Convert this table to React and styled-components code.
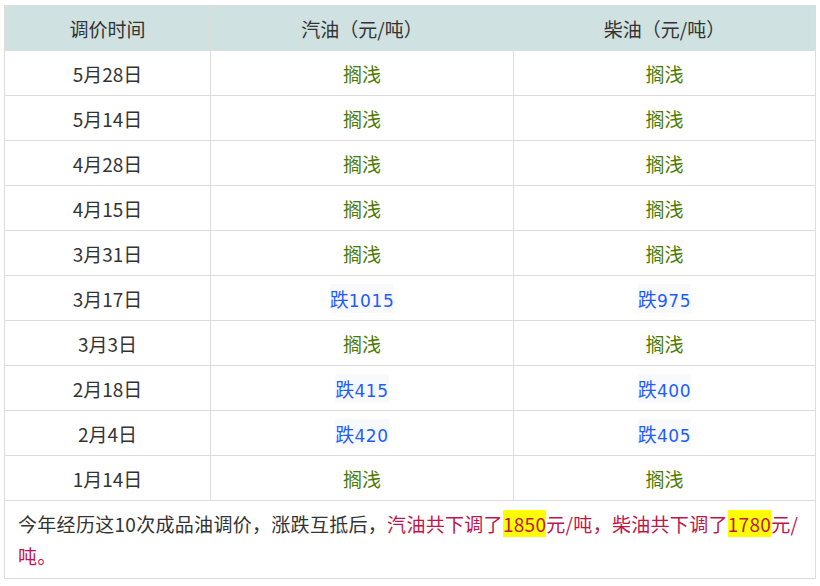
import React from 'react';
import styled, { createGlobalStyle } from 'styled-components';

const GlobalStyle = createGlobalStyle`
  body {
    margin: 0;
    background: #fff;
    font-family: 'Noto Sans CJK SC', 'Noto Sans', sans-serif;
  }
`;

const Page = styled.div`
  padding: 5px 4px;
`;

const Table = styled.table`
  width: 812px;
  border-collapse: collapse;
  border: 1px solid #dddddd;
  font-size: 19px;
  color: #333;
`;

const HeadCell = styled.th`
  height: 44px;
  padding: 0;
  font-weight: normal;
  background: #d0e1e1;
  border: 1px solid #dddddd;
  text-align: center;
`;

const Cell = styled.td`
  height: 44px;
  padding: 0;
  border: 1px solid #dddddd;
  text-align: center;
`;

const Stranded = styled.span`
  color: #4c7a00;
`;

const Drop = styled.span`
  color: #1f5cff;
  background: #f8f9fb;
  padding: 1px 0;
`;

const Digits = styled.span`
  font-family: 'DejaVu Sans', sans-serif;
  font-size: 17px;
  letter-spacing: 0.6px;
`;

const Summary = styled.td`
  padding: 7px 13px 6px;
  border: 1px solid #dddddd;
  text-align: left;
  line-height: 32px;
  letter-spacing: 0.3px;
`;

const Red = styled.span`
  color: #c0144a;
`;

const Mark = styled.span`
  background: #ffff00;
`;

const rows = [
  { date: '5月28日', gas: null, diesel: null },
  { date: '5月14日', gas: null, diesel: null },
  { date: '4月28日', gas: null, diesel: null },
  { date: '4月15日', gas: null, diesel: null },
  { date: '3月31日', gas: null, diesel: null },
  { date: '3月17日', gas: '1015', diesel: '975' },
  { date: '3月3日', gas: null, diesel: null },
  { date: '2月18日', gas: '415', diesel: '400' },
  { date: '2月4日', gas: '420', diesel: '405' },
  { date: '1月14日', gas: null, diesel: null },
];

const Change = ({ value }) =>
  value ? (
    <Drop>
      跌<Digits>{value}</Digits>
    </Drop>
  ) : (
    <Stranded>搁浅</Stranded>
  );

const App = () => {
  return (
    <React.Fragment>
      <GlobalStyle />
      <Page>
        <Table>
          <colgroup>
            <col style={{ width: '206px' }} />
            <col style={{ width: '303px' }} />
            <col style={{ width: '302px' }} />
          </colgroup>
          <thead>
            <tr>
              <HeadCell>调价时间</HeadCell>
              <HeadCell>汽油（元/吨）</HeadCell>
              <HeadCell>柴油（元/吨）</HeadCell>
            </tr>
          </thead>
          <tbody>
            {rows.map((row) => (
              <tr key={row.date}>
                <Cell>{row.date}</Cell>
                <Cell>
                  <Change value={row.gas} />
                </Cell>
                <Cell>
                  <Change value={row.diesel} />
                </Cell>
              </tr>
            ))}
            <tr>
              <Summary colSpan={3}>
                今年经历这10次成品油调价，涨跌互抵后，
                <Red>
                  汽油共下调了<Mark>1850</Mark>元/吨，柴油共下调了
                  <Mark>1780</Mark>元/吨。
                </Red>
              </Summary>
            </tr>
          </tbody>
        </Table>
      </Page>
    </React.Fragment>
  );
};

export default App;
